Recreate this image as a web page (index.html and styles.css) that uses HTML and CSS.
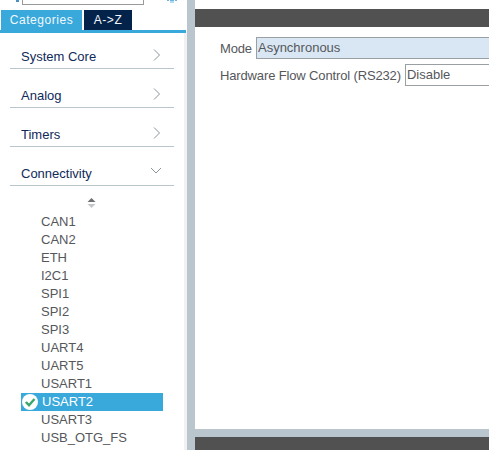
FILE: index.html
```html
<!DOCTYPE html>
<html lang="en">
<head>
<meta charset="utf-8">
<title>USART2</title>
<link rel="stylesheet" href="styles.css">
</head>
<body>
<div class="app">
  <aside class="side">
    <div class="search-row">
      <span class="search-mark"></span>
      <span class="search-box"></span>
      <svg class="gear" width="10" height="3" viewBox="0 0 10 3"><path d="M0 .5h2M3 .5h4M8 .5h2M3 2h4" stroke="#6db3e0" stroke-width="1.200"/></svg>
    </div>
    <div class="tabs">
      <span class="tab tab-on">Categories</span>
      <span class="tab tab-off">A-&gt;Z</span>
    </div>
    <div class="tree">
      <div class="group">
        <span>System Core</span>
        <svg class="chev" width="8" height="12" viewBox="0 0 8 12"><path d="M1 .5 6.500 6 1 11.500" fill="none" stroke="#8a9499"/></svg>
      </div>
      <div class="group">
        <span>Analog</span>
        <svg class="chev" width="8" height="12" viewBox="0 0 8 12"><path d="M1 .5 6.500 6 1 11.500" fill="none" stroke="#8a9499"/></svg>
      </div>
      <div class="group">
        <span>Timers</span>
        <svg class="chev" width="8" height="12" viewBox="0 0 8 12"><path d="M1 .5 6.500 6 1 11.500" fill="none" stroke="#8a9499"/></svg>
      </div>
      <div class="group">
        <span>Connectivity</span>
        <svg class="chev-down" width="12" height="8" viewBox="0 0 12 8"><path d="M1 1 6 6 11 1" fill="none" stroke="#8a9499"/></svg>
      </div>
      <div class="sorter">
        <svg width="9" height="10" viewBox="0 0 9 10"><path d="M4.500 0 8.500 4H.5z" fill="#6d7072"/><path d="M.5 6h8L4.500 10z" fill="#c4c6c7"/></svg>
      </div>
      <ul class="items">
        <li class="item">CAN1</li>
        <li class="item">CAN2</li>
        <li class="item">ETH</li>
        <li class="item">I2C1</li>
        <li class="item">SPI1</li>
        <li class="item">SPI2</li>
        <li class="item">SPI3</li>
        <li class="item">UART4</li>
        <li class="item">UART5</li>
        <li class="item">USART1</li>
        <li class="item item-on">
          <svg class="check" width="16" height="16" viewBox="0 0 16 16"><circle cx="8" cy="8" r="8" fill="#fff"/><path d="M3.800 8 7 11.200 12.500 5" fill="none" stroke="#3aa76d" stroke-width="2.400"/></svg>
          USART2
        </li>
        <li class="item">USART3</li>
        <li class="item">USB_OTG_FS</li>
      </ul>
    </div>
  </aside>
  <div class="gutter"></div>
  <main class="main">
    <div class="main-top"></div>
    <div class="dark-bar"></div>
    <div class="form">
      <div class="row">
        <label class="label">Mode</label>
        <div class="field field-on">Asynchronous</div>
      </div>
      <div class="row">
        <label class="label">Hardware Flow Control (RS232)</label>
        <div class="field">Disable</div>
      </div>
    </div>
    <div class="splitter"></div>
    <div class="dark-foot"></div>
  </main>
</div>
</body>
</html>
```
FILE: styles.css
```css
* { box-sizing: border-box; }
html, body { margin: 0; padding: 0; }
body {
  width: 489px;
  height: 450px;
  overflow: hidden;
  background: #fff;
  font-family: "Liberation Sans", Arial, sans-serif;
  font-size: 13px;
  color: #55575b;
}
.app { display: flex; height: 450px; }
.side { width: 187px; display: flex; flex-direction: column; background: #fff; }
.search-row { height: 10px; display: flex; }
.search-mark { width: 3px; height: 2px; margin-left: 16px; background: #4a90c4; }
.search-box {
  width: 122px; height: 5px; margin-left: 3px;
  border: 1px solid #9a9a9a; border-top: 0; background: #fff;
}
.gear { margin-left: 23px; }
.tabs {
  display: flex;
  width: 186px;
  height: 23px;
  padding-left: 1px;
  gap: 2px;
  border-bottom: 3px solid #39a9dc;
}
.tab {
  display: flex;
  align-items: center;
  justify-content: center;
  height: 20px;
  font-size: 12px;
  letter-spacing: .55px;
  color: #f2f7fb;
}
.tab-on { width: 81px; background: #39a9dc; }
.tab-off { width: 48px; background: #03234b; }
.tree {
  flex: 1;
  border-right: 3px solid #f1f1f1;
  padding-left: 10px;
}
.group {
  width: 164px;
  height: 39px;
  padding: 0 13px 4px 11px;
  display: flex;
  align-items: flex-end;
  justify-content: space-between;
  border-bottom: 1px solid #b9c6cd;
  color: #0f2a5a;
  line-height: 15px;
}
.group:first-child { height: 36px; }
.chev { margin-bottom: 3px; }
.chev-down { margin: 0 -1px 6px 0; }
.sorter { width: 164px; height: 27px; padding: 12px 0 0 77px; line-height: 0; }
.items { list-style: none; margin: 0; padding: 0; }
.item {
  width: 142px;
  height: 18px;
  line-height: 18px;
  padding-left: 20px;
  margin-left: 11px;
  white-space: nowrap;
}
.item-on {
  position: relative;
  padding-left: 21px;
  background: #39a9dc;
  color: #fff;
}
.check { position: absolute; left: 1px; top: 1px; }
.gutter { width: 8px; background: #b9c6cd; }
.main { flex: 1; min-width: 0; display: flex; flex-direction: column; overflow: hidden; }
.main-top { height: 9px; }
.dark-bar { height: 18px; background: #505150; }
.form { flex: 1; padding: 10px 0 0 25px; }
.row { display: flex; align-items: center; height: 22px; margin-bottom: 5px; white-space: nowrap; }
.label { margin-right: 4px; letter-spacing: -.14px; }
.field {
  flex: 1;
  height: 22px;
  line-height: 20px;
  padding-left: 1px;
  border: 1px solid #9a9fa3;
  border-right: 0;
  background: #fff;
  min-width: 0;
}
.field-on { background: #d9e7f4; }
.splitter { height: 8px; background: #b9c6cd; }
.dark-foot { height: 13px; background: #505150; }
```
